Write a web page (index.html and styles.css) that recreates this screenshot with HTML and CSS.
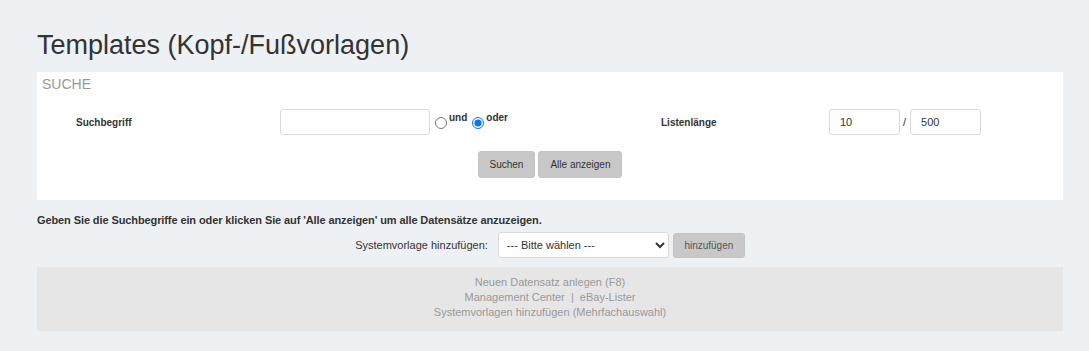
FILE: index.html
```html
<!DOCTYPE html>
<html lang="de">
<head>
<meta charset="utf-8">
<title>Templates (Kopf-/Fußvorlagen)</title>
<link rel="stylesheet" href="styles.css">
</head>
<body>
<div class="page">
  <h1 class="page-title">Templates (Kopf-/Fußvorlagen)</h1>

  <section class="panel">
    <div class="panel-title">SUCHE</div>
    <div class="search-row">
      <label class="field-label">Suchbegriff</label>
      <div class="field-group">
        <input class="text-input term-input" type="text">
        <input class="radio" type="radio" name="mode" id="m-und">
        <label class="radio-label" for="m-und">und</label>
        <input class="radio" type="radio" name="mode" id="m-oder" checked>
        <label class="radio-label" for="m-oder">oder</label>
      </div>
      <label class="field-label">Listenlänge</label>
      <div class="field-group">
        <input class="text-input small-input" type="text" value="10">
        <span class="slash">/</span>
        <input class="text-input small-input" type="text" value="500">
      </div>
    </div>
    <div class="actions">
      <button class="btn" type="button">Suchen</button>
      <button class="btn" type="button">Alle anzeigen</button>
    </div>
  </section>

  <p class="hint">Geben Sie die Suchbegriffe ein oder klicken Sie auf 'Alle anzeigen' um alle Datensätze anzuzeigen.</p>

  <div class="add-row">
    <span class="add-label">Systemvorlage hinzufügen:</span>
    <select class="select">
      <option>--- Bitte wählen ---</option>
    </select>
    <button class="btn btn-add" type="button">hinzufügen</button>
  </div>

  <div class="footer-box">
    <div>Neuen Datensatz anlegen (F8)</div>
    <div>Management Center &nbsp;|&nbsp; eBay-Lister</div>
    <div>Systemvorlagen hinzufügen (Mehrfachauswahl)</div>
  </div>
</div>
</body>
</html>
```

FILE: styles.css
```css
html, body {
  margin: 0;
  padding: 0;
}
body {
  background: #eef1f4;
  font-family: "Liberation Sans", Arial, sans-serif;
  color: #333;
}
.page {
  padding: 30px 26px 0 37px;
}
.page-title {
  margin: 0;
  font-size: 27px;
  line-height: 31px;
  font-weight: normal;
  color: #333;
}
.panel {
  margin-top: 11px;
  background: #fff;
  padding: 4px 0 22px 0;
}
.panel-title {
  font-size: 14px;
  line-height: 16px;
  color: #999;
  padding-left: 5px;
}
.search-row {
  margin-top: 17px;
  padding-left: 39px;
  display: grid;
  grid-template-columns: 204px 381px 168px 1fr;
  align-items: center;
  height: 26px;
}
.field-label {
  font-size: 10px;
  font-weight: bold;
  color: #333;
}
.field-group {
  display: flex;
  align-items: center;
  height: 26px;
}
.text-input {
  box-sizing: border-box;
  height: 26px;
  border: 1px solid #dadada;
  border-radius: 3px;
  background: #fff;
  font-family: "Liberation Sans", Arial, sans-serif;
  font-size: 11px;
  color: #333;
  padding: 0 8px;
  margin: 0;
  outline: none;
}
.term-input {
  width: 150px;
}
.small-input {
  width: 71px;
  padding-left: 10px;
}
.radio {
  width: 12px;
  height: 12px;
  margin: 2px 2px 0 5px;
}
.radio-label {
  align-self: flex-start;
  margin-top: 3px;
  font-size: 10px;
  font-weight: bold;
  color: #333;
}
.slash {
  font-size: 11px;
  color: #333;
  margin: 0 4px 0 3px;
}
.actions {
  margin-top: 16px;
  display: flex;
  justify-content: center;
  gap: 3px;
}
.btn {
  box-sizing: border-box;
  height: 27px;
  padding: 0 11px;
  border: 1px solid #c4c4c4;
  border-radius: 3px;
  background: #c8c8c8;
  font-family: "Liberation Sans", Arial, sans-serif;
  font-size: 10px;
  color: #333;
  margin: 0;
}
.hint {
  margin: 14px 0 0 0;
  font-size: 11px;
  line-height: 13px;
  font-weight: bold;
  color: #333;
  letter-spacing: -0.1px;
}
.add-row {
  margin-top: 4px;
  display: flex;
  justify-content: center;
  align-items: center;
  height: 27px;
}
.add-label {
  font-size: 11px;
  color: #333;
  margin-right: 10px;
}
.select {
  box-sizing: border-box;
  width: 171px;
  height: 26px;
  border: 1px solid #dadada;
  border-radius: 3px;
  background: #fff;
  font-family: "Liberation Sans", Arial, sans-serif;
  font-size: 11px;
  color: #333;
  padding: 0 4px;
  margin: 0 4px 0 0;
}
.btn-add {
  height: 25px;
  width: 72px;
  padding: 0;
  margin-top: 2px;
  color: #555;
}
.footer-box {
  margin-top: 9px;
  background: #e6e6e6;
  padding: 8px 0 11px;
  text-align: center;
  font-size: 11px;
  line-height: 15px;
  color: #999;
}
```
